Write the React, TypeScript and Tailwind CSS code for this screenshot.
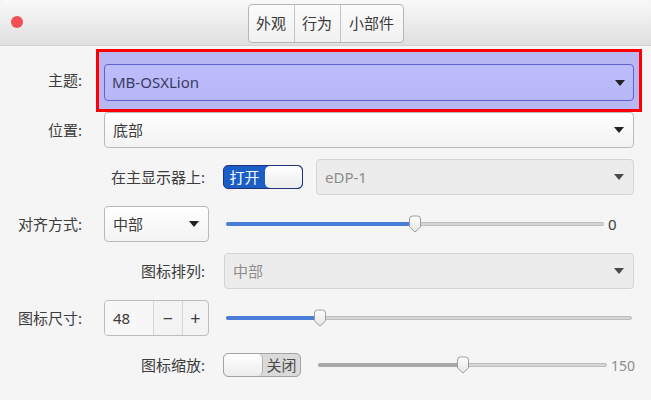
import type { ReactNode } from 'react'

const FONT = "font-['Noto_Sans','Noto_Sans_CJK_SC',sans-serif]"

function Arrow({ grey }: { grey?: boolean }) {
  return (
    <svg width="10" height="6" viewBox="0 0 10 6" className="shrink-0">
      <path d="M0 0h10L5 6z" fill={grey ? '#4a4a4a' : '#222'} />
    </svg>
  )
}

function Combo({
  value,
  className,
  disabled,
}: {
  value: string
  className?: string
  disabled?: boolean
}) {
  return (
    <div
      className={`flex h-9 items-center justify-between rounded-[4px] border pl-[8px] pr-[9px] ${
        disabled
          ? 'border-[#d4d4d4] bg-[#ececec] text-[#8c8c8c]'
          : 'border-[#b9b9b9] bg-gradient-to-b from-[#ffffff] to-[#f3f3f3] text-[#3c3c3c]'
      } ${className ?? ''}`}
    >
      <span>{value}</span>
      <Arrow grey={disabled} />
    </div>
  )
}

function Thumb({ left }: { left: number }) {
  return (
    <svg
      width="14"
      height="18"
      viewBox="0 0 14 18"
      className="absolute top-1/2 -translate-x-1/2 -translate-y-1/2"
      style={{ left }}
    >
      <defs>
        <linearGradient id="tg" x1="0" y1="0" x2="0" y2="1">
          <stop offset="0" stopColor="#fdfdfd" />
          <stop offset="1" stopColor="#e6e6e6" />
        </linearGradient>
      </defs>
      <path
        d="M1.5 4a3 3 0 0 1 3-3h5a3 3 0 0 1 3 3v8l-5.5 5l-5.5-5z"
        fill="url(#tg)"
        stroke="#9c9c9c"
      />
    </svg>
  )
}

function Slider({
  width,
  pos,
  fill,
}: {
  width: number
  pos: number
  fill: string
}) {
  return (
    <div className="relative h-[20px] shrink-0" style={{ width }}>
      <div className="absolute left-0 right-0 top-1/2 h-[4px] -translate-y-1/2 rounded-full border border-[#bdbdbd] bg-[#d6d6d6]" />
      <div
        className="absolute left-0 top-1/2 h-[4px] -translate-y-1/2 rounded-full"
        style={{ width: pos, background: fill }}
      />
      <Thumb left={pos} />
    </div>
  )
}

function Label({ w, children }: { w: string; children: ReactNode }) {
  return <div className={`${w} shrink-0 text-right text-[#3c3c3c]`}>{children}</div>
}

export default function App() {
  return (
    <div className={`${FONT} h-[400px] w-[651px] overflow-hidden bg-[#f5f5f5] text-[15px]`}>
      {/* title bar */}
      <div className="relative flex h-[46px] items-center justify-center rounded-t-[7px] border-b border-[#d2d2d2] bg-gradient-to-b from-[#f9f9f9] to-[#dfdfdf]">
        <div className="absolute left-[11px] top-[16px] h-[12px] w-[12px] rounded-full bg-[#f04f58]" />
        <div className="mt-[1px] flex h-[39px] overflow-hidden rounded-[4px] border border-[#b6b6b6] bg-gradient-to-b from-[#fbfbfb] to-[#f1f1f1] text-[#3a3a3a]">
          <div className="flex w-[46px] items-center justify-center border-r border-[#c4c4c4]">外观</div>
          <div className="flex w-[46px] items-center justify-center border-r border-[#c4c4c4]">行为</div>
          <div className="flex w-[62px] items-center justify-center">小部件</div>
        </div>
      </div>

      {/* 主题 */}
      <div className="mt-[3px] flex items-center">
        <Label w="w-[82px]">主题:</Label>
        <div className="ml-[14px] w-[546px] border-[3px] border-[#ff0000] bg-[#b7b7f4] pb-[8px] pl-[5px] pr-[5px] pt-[12px]">
          <div className="flex h-[37px] items-center justify-between rounded-[4px] border border-[#5f5fd6] bg-gradient-to-b from-[#bdbdfb] to-[#b7b7f5] pl-[7px] pr-[8px] text-[#3a3a64]">
            <span>MB-OSXLion</span>
            <Arrow />
          </div>
        </div>
      </div>

      {/* 位置 */}
      <div className="flex items-center">
        <Label w="w-[82px]">位置:</Label>
        <Combo value="底部" className="ml-[22px] w-[530px]" />
      </div>

      {/* 在主显示器上 */}
      <div className="mt-[11px] flex h-9 items-center">
        <Label w="w-[205px]">在主显示器上:</Label>
        <div className="ml-[18px] flex h-[24px] w-[80px] overflow-hidden rounded-[5px] border border-[#23307a] bg-[#1b5ec6]">
          <div className="flex w-[41px] items-center justify-center text-white">打开</div>
          <div className="flex-1 rounded-[5px] bg-gradient-to-b from-[#ffffff] to-[#ececec]" />
        </div>
        <Combo value="eDP-1" disabled className="ml-[13px] w-[318px]" />
      </div>

      {/* 对齐方式 */}
      <div className="mt-[11px] flex h-9 items-center">
        <Label w="w-[82px]">对齐方式:</Label>
        <Combo value="中部" className="ml-[22px] w-[105px]" />
        <div className="ml-[17px] flex items-center">
          <Slider width={378} pos={189} fill="#4b7edb" />
          <span className="ml-[4px] text-[#3c3c3c]">0</span>
        </div>
      </div>

      {/* 图标排列 */}
      <div className="mt-[11px] flex items-center">
        <Label w="w-[205px]">图标排列:</Label>
        <Combo value="中部" disabled className="ml-[19px] w-[410px]" />
      </div>

      {/* 图标尺寸 */}
      <div className="mt-[11px] flex h-9 items-center">
        <Label w="w-[82px]">图标尺寸:</Label>
        <div className="ml-[22px] flex h-9 w-[105px] overflow-hidden rounded-[4px] border border-[#bdbdbd] bg-[#f3f3f3] text-[#3c3c3c]">
          <div className="flex w-[48px] items-center bg-[#f7f7f7] pl-[8px]">48</div>
          <div className="flex w-[29px] items-center justify-center border-l border-[#d6d6d6] text-[18px] leading-none">−</div>
          <div className="flex flex-1 items-center justify-center border-l border-[#d6d6d6] text-[18px] leading-none">+</div>
        </div>
        <div className="ml-[17px]">
          <Slider width={406} pos={94} fill="#4b7edb" />
        </div>
      </div>

      {/* 图标缩放 */}
      <div className="mt-[11px] flex h-[36px] items-center">
        <Label w="w-[205px]">图标缩放:</Label>
        <div className="ml-[18px] flex h-[24px] w-[78px] overflow-hidden rounded-[5px] border border-[#a3a3a3] bg-[#dadada]">
          <div className="w-[39px] rounded-[5px] border-r border-[#b0b0b0] bg-gradient-to-b from-[#ffffff] to-[#ececec]" />
          <div className="flex flex-1 items-center justify-center text-[#4a4a4a]">关闭</div>
        </div>
        <div className="ml-[17px] flex items-center">
          <Slider width={289} pos={145} fill="#a9a9a9" />
          <span className="ml-[4px] text-[14px] text-[#8c8c8c]">150</span>
        </div>
      </div>
    </div>
  )
}
